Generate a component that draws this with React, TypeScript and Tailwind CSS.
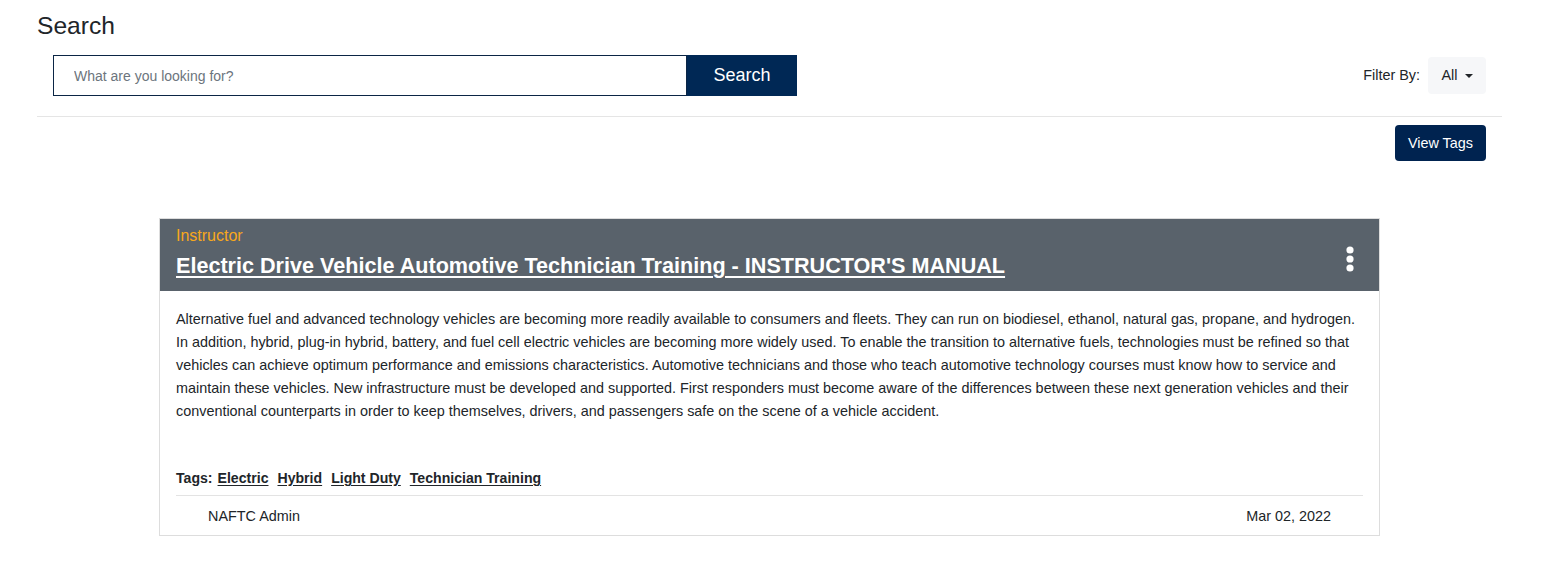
const tags = ["Electric", "Hybrid", "Light Duty", "Technician Training"];

const Kebab = () => (
  <svg width="10" height="26" viewBox="0 0 10 26" className="mt-1">
    <circle cx="5" cy="4" r="3.6" fill="#fff" />
    <circle cx="5" cy="13" r="3.6" fill="#fff" />
    <circle cx="5" cy="22" r="3.6" fill="#fff" />
  </svg>
);

const ResourceCard = () => {
  return (
    <div className="w-[1221px] mx-auto border border-[#dddddd] bg-white">
      <div className="bg-[#59626b] h-[72px] pl-4 pr-6 pt-[7px] flex justify-between">
        <div>
          <div className="text-[16px] leading-[20px] text-[#f8a81b]">Instructor</div>
          <a
            href="#"
            className="block mt-[7px] text-[21.6px] leading-[26px] font-bold text-white underline underline-offset-[3px] decoration-2"
          >
            Electric Drive Vehicle Automotive Technician Training - INSTRUCTOR'S MANUAL
          </a>
        </div>
        <div className="pt-[16px]">
          <Kebab />
        </div>
      </div>
      <div className="px-4 pt-[17px]">
        <p className="text-[14.4px] leading-[23px] text-[#212529] pr-2">
          Alternative fuel and advanced technology vehicles are becoming more readily available to consumers and fleets. They can run on biodiesel, ethanol, natural gas, propane, and hydrogen. In addition, hybrid, plug-in hybrid, battery, and fuel cell electric vehicles are becoming more widely used. To enable the transition to alternative fuels, technologies must be refined so that vehicles can achieve optimum performance and emissions characteristics. Automotive technicians and those who teach automotive technology courses must know how to service and maintain these vehicles. New infrastructure must be developed and supported. First responders must become aware of the differences between these next generation vehicles and their conventional counterparts in order to keep themselves, drivers, and passengers safe on the scene of a vehicle accident.
        </p>
        <div className="mt-[45px] flex items-center gap-[9px] text-[14.1px] leading-[20px] font-bold text-[#212529] pb-[7px] border-b border-[#e3e3e3]">
          <span className="-mr-[4px]">Tags:</span>
          {tags.map((t) => (
            <a key={t} href="#" className="underline underline-offset-2">
              {t}
            </a>
          ))}
        </div>
        <div className="flex justify-between px-8 pt-[10px] pb-[9px] text-[14.4px] leading-[20px] text-[#212529]">
          <span>NAFTC Admin</span>
          <span>Mar 02, 2022</span>
        </div>
      </div>
    </div>
  );
};

export default function App() {
  return (
    <div className="min-h-[563px] bg-white font-['Liberation_Sans',Arial,sans-serif] text-[#212529]">
      <div className="mx-[37px] w-[1465px] pt-[10px]">
        <h1 className="text-[24.6px] leading-[32px]">Search</h1>
        <div className="flex items-center justify-between pl-4 pr-4 mt-[13px] pb-[20px] border-b border-[#e5e5e5]">
          <div className="flex h-[41px]">
            <input
              placeholder="What are you looking for?"
              className="w-[634px] h-full border border-[#0b2545] px-5 text-[14px] outline-none placeholder:text-[#6c757d]"
            />
            <button className="w-[110px] h-full bg-[#002855] text-white text-[18px]">Search</button>
          </div>
          <div className="flex items-center gap-2">
            <span className="text-[14.4px]">Filter By:</span>
            <button className="h-[37px] w-[58px] rounded bg-[#f6f7f9] flex items-center justify-center gap-[7px] text-[14.4px]">
              All
              <span className="border-x-[4px] border-x-transparent border-t-[4px] border-t-[#212529] mt-[1px]" />
            </button>
          </div>
        </div>
        <div className="flex justify-end pr-4 mt-[8px]">
          <button className="h-[36px] px-[13px] rounded bg-[#002350] text-white text-[14.4px] pt-px">View Tags</button>
        </div>
        <div className="mt-[57px]">
          <ResourceCard />
        </div>
      </div>
    </div>
  );
}
